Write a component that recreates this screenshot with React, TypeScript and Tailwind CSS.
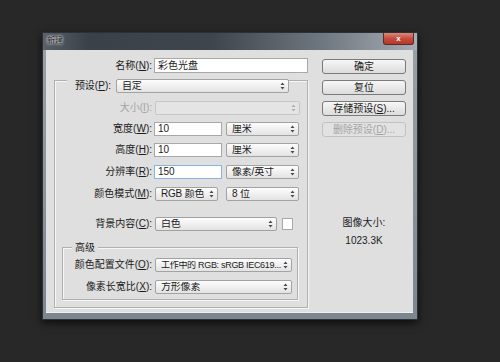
import type { ReactNode } from 'react';

const font = "font-['Liberation_Sans','Noto_Sans_CJK_SC',sans-serif]";

function Arrows({ muted }: { muted?: boolean }) {
  return (
    <svg width="5" height="8" viewBox="0 0 5 8" className="shrink-0">
      <path d="M2.5 0.5L4.5 3H0.5ZM0.5 5H4.5L2.5 7.5Z" fill={muted ? '#b0b0b0' : '#4a4a4a'} />
    </svg>
  );
}

function Label({ children, className = '', muted }: { children: ReactNode; className?: string; muted?: boolean }) {
  return (
    <div
      className={`shrink-0 text-right text-[10px] leading-[14px] ${muted ? 'text-[#a3a3a3]' : 'text-[#1b1b1b]'} ${className}`}
    >
      {children}
    </div>
  );
}

function Select({
  value,
  className = '',
  textClass = 'text-[10px] tracking-[-0.2px]',
  disabled,
}: {
  value?: string;
  className?: string;
  textClass?: string;
  disabled?: boolean;
}) {
  return (
    <div
      className={`flex h-[14px] items-center justify-between rounded-[2px] border pl-[5px] pr-[3px] leading-none ${
        disabled
          ? 'border-[#c6c6c6] bg-[#e4e4e4]'
          : 'border-[#a2a2a2] bg-gradient-to-b from-[#fdfdfd] to-[#e3e3e3] text-[#1b1b1b]'
      } ${className}`}
    >
      <span className={`overflow-hidden whitespace-nowrap ${textClass}`}>{value}</span>
      <Arrows muted={disabled} />
    </div>
  );
}

function Input({ value, className = '', focused }: { value: string; className?: string; focused?: boolean }) {
  return (
    <div
      className={`flex h-[14px] items-center border bg-white pl-[3px] text-[10px] leading-none text-[#1b1b1b] ${
        focused ? 'border-[#86b4e0]' : 'border-[#a8a8a8]'
      } ${className}`}
    >
      {value}
    </div>
  );
}

function Button({ children, disabled }: { children: ReactNode; disabled?: boolean }) {
  return (
    <div
      className={`flex h-[15px] w-[84px] items-center justify-center rounded-[3px] border text-[10px] leading-none ${
        disabled
          ? 'border-[#c2c2c2] bg-[#e2e2e2] text-[#a5a5a5]'
          : 'border-[#7a7a7a] bg-gradient-to-b from-[#f6f6f6] to-[#dcdcdc] text-[#1b1b1b]'
      }`}
    >
      {children}
    </div>
  );
}

export default function App() {
  const rows = [
    { label: <>宽度(<u>W</u>):</>, value: '10', unit: '厘米', mt: 'mt-[7px]' },
    { label: <>高度(<u>H</u>):</>, value: '10', unit: '厘米', mt: 'mt-[7px]' },
    { label: <>分辨率(<u>R</u>):</>, value: '150', unit: '像素/英寸', mt: 'mt-[8px]', focused: true },
  ];

  return (
    <div className={`h-[362px] w-[500px] overflow-hidden bg-[#282828] pl-[42px] pt-[32px] ${font}`}>
      {/* window */}
      <div className="flex h-[288px] w-[376px] flex-col border border-[#2c3136] bg-gradient-to-b from-[#9aa1a8] to-[#7d868f] shadow-[0_3px_8px_rgba(0,0,0,0.7)]">
        {/* title bar */}
        <div className="flex h-[17px] items-start justify-between bg-[linear-gradient(90deg,#5a6068_0%,#3b4148_12%,#3e454c_45%,#6f7780_75%,#a6adb4_100%)]">
          <span className="ml-[4px] mt-[3px] text-[8px] leading-[10px] text-[#111] [text-shadow:0_0_3px_#fff,0_0_2px_#fff]">新建</span>
          <div className="mr-[3px] flex h-[12px] w-[31px] items-center justify-center rounded-b-[3px] border border-t-0 border-[#5a2a24] bg-gradient-to-b from-[#d9887c] via-[#c64b3c] to-[#b63a2c] text-[8px] font-bold leading-none text-white">
            x
          </div>
        </div>

        {/* client */}
        <div className="ml-[3px] mr-[4px] flex h-[263px] border-b border-[#eef1f4] bg-[#dfdfdf]">
          {/* left column */}
          <div className="flex w-[262px] flex-col pt-[8px]">
            <div className="flex items-center">
              <Label className="w-[106px]">名称(<u>N</u>):</Label>
              <Input value="彩色光盘" className="ml-[2px] h-[15px] w-[154px]" />
            </div>

            {/* preset group */}
            <div className="ml-[8px] mt-[7px] flex h-[228px] w-[254px] flex-col border border-[#b0b0b0] shadow-[inset_1px_1px_0_#f6f6f6,1px_1px_0_#f6f6f6]">
              <div className="-mt-[2px] flex items-center">
                <Label className="ml-[12px] w-[49px] bg-[#dfdfdf] pr-[5px]">预设(<u>P</u>):</Label>
                <Select value="自定" className="w-[173px]" />
              </div>

              <div className="mt-[8px] flex items-center">
                <Label muted className="w-[97px]">大小(<u>I</u>):</Label>
                <Select disabled className="ml-[3px] w-[145px]" />
              </div>

              {rows.map((r) => (
                <div key={r.unit + r.value} className={`${r.mt} flex items-center`}>
                  <Label className="w-[97px]">{r.label}</Label>
                  <Input value={r.value} focused={r.focused} className="ml-[2px] w-[68px]" />
                  <Select value={r.unit} className="ml-[4px] w-[73px]" />
                </div>
              ))}

              <div className="mt-[8px] flex items-center">
                <Label className="w-[97px]">颜色模式(<u>M</u>):</Label>
                <Select value="RGB 颜色" className="ml-[3px] w-[63px]" />
                <Select value="8 位" className="ml-[8px] w-[73px]" />
              </div>

              <div className="mt-[16px] flex items-center">
                <Label className="w-[97px]">背景内容(<u>C</u>):</Label>
                <Select value="白色" className="ml-[3px] w-[122px]" />
                <div className="ml-[5px] h-[12px] w-[11px] border border-[#a8a8a8] bg-white" />
              </div>

              {/* advanced group */}
              <div className="ml-[7px] mt-[16px] flex h-[53px] w-[236px] flex-col border border-[#b0b0b0] shadow-[inset_1px_1px_0_#f6f6f6,1px_1px_0_#f6f6f6]">
                <Label className="-mt-[7px] ml-[9px] self-start bg-[#dfdfdf] px-[3px]">高级</Label>
                <div className="mt-[3px] flex items-center">
                  <Label className="w-[89px]">颜色配置文件(<u>O</u>):</Label>
                  <Select
                    value="工作中的 RGB: sRGB IEC619..."
                    textClass="text-[9px] tracking-[-0.3px]"
                    className="ml-[3px] w-[137px] pl-[3px]"
                  />
                </div>
                <div className="mt-[8px] flex items-center">
                  <Label className="w-[89px]">像素长宽比(<u>X</u>):</Label>
                  <Select value="方形像素" className="ml-[3px] w-[137px]" />
                </div>
              </div>
            </div>
          </div>

          {/* right column */}
          <div className="ml-[14px] flex flex-col items-center pt-[9px]">
            <div className="flex flex-col gap-[6px]">
              <Button>确定</Button>
              <Button>复位</Button>
              <Button>
                存储预设(<u>S</u>)...
              </Button>
              <Button disabled>
                删除预设(<u>D</u>)...
              </Button>
            </div>
            <div className="mt-[80px] text-[10px] leading-[12px] text-[#1b1b1b]">图像大小:</div>
            <div className="mt-[6px] text-[10px] leading-[12px] text-[#1b1b1b]">1023.3K</div>
          </div>
        </div>
      </div>
    </div>
  );
}
